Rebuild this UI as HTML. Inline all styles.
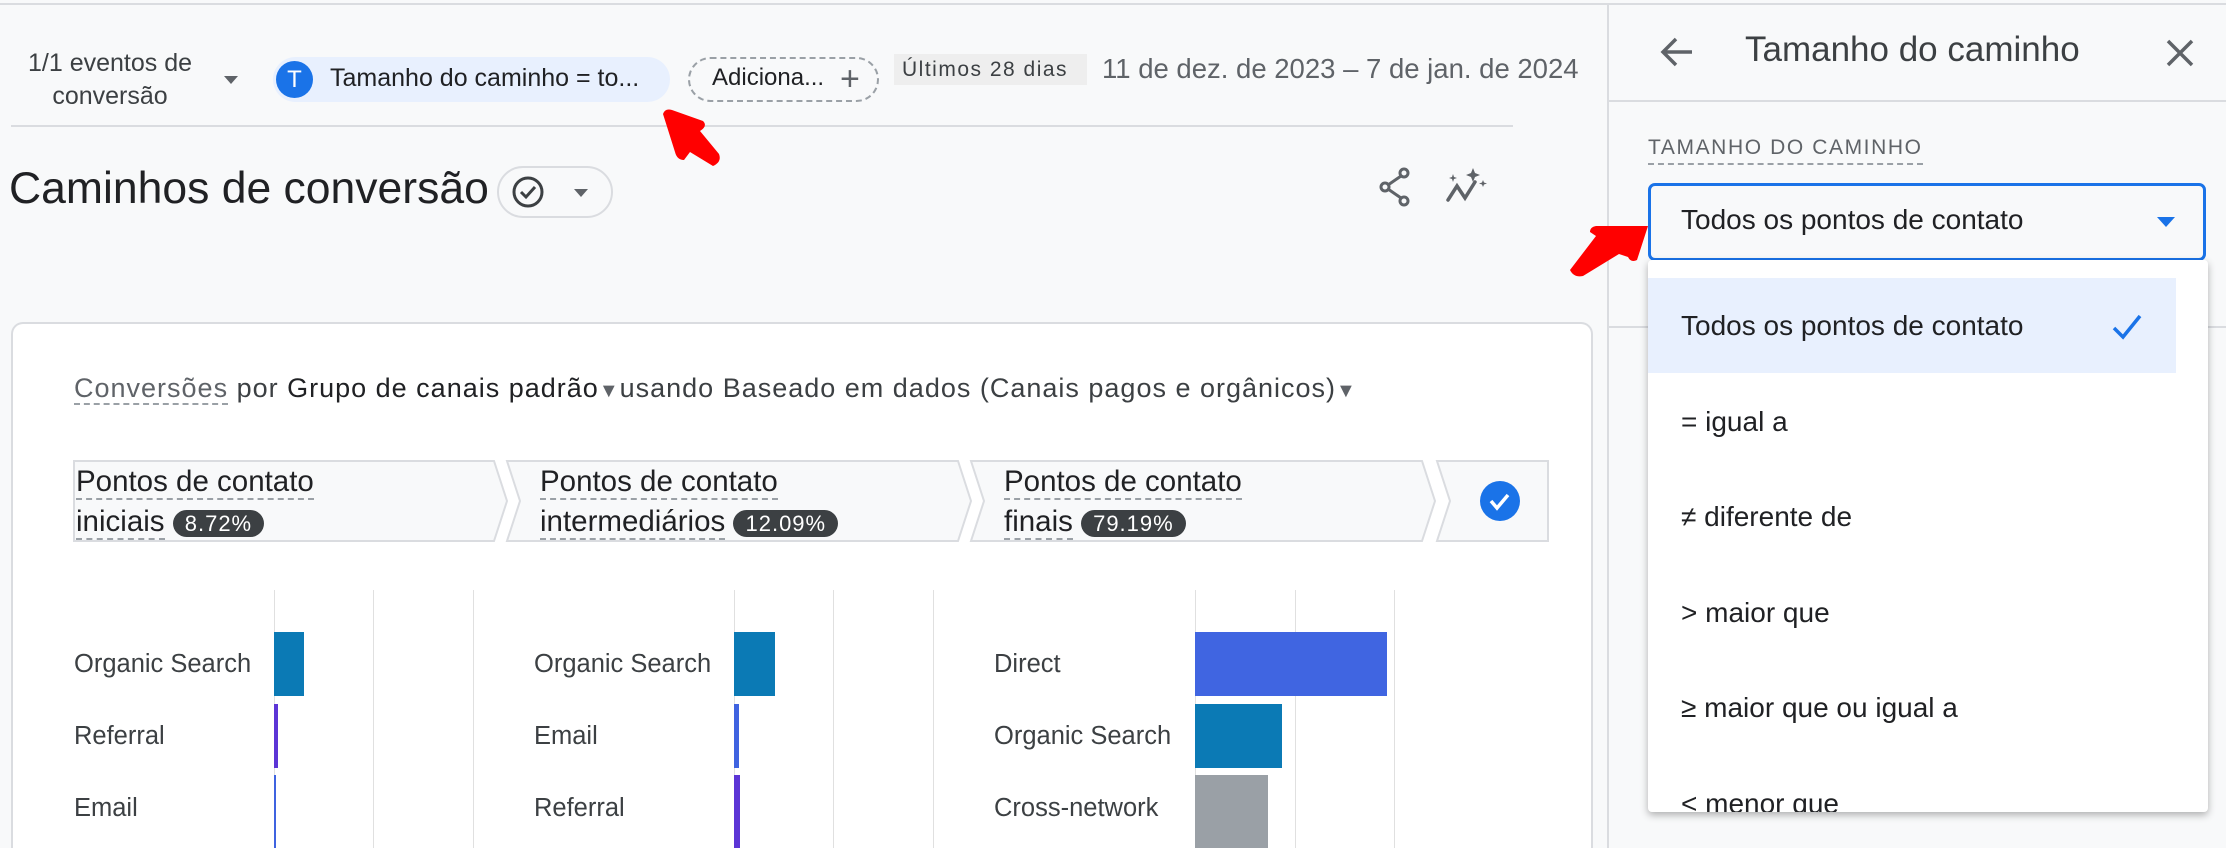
<!DOCTYPE html>
<html style="width:2226px;height:848px;overflow:hidden"><head><meta charset="utf-8"><style>
*{box-sizing:border-box;margin:0;padding:0}
body{width:2226px;height:848px;overflow:hidden;background:#f8f9fa;font-family:"Liberation Sans",sans-serif;color:#202124;position:relative}
.a{position:absolute;white-space:nowrap}
.dot{border-bottom:2px dashed #9aa0a6}
.gl{position:absolute;width:1px;background:#e0e0e0;top:590px;height:258px}
.bd{background:#3c4043;color:#fff;border-radius:15px;padding:1px 12px;font-size:22px;letter-spacing:1px}
</style></head><body>
<div class="a" style="left:0;top:3px;width:2226px;height:2px;background:#dadce0"></div>
<div class="a" style="left:28px;top:47px;font-size:25px;line-height:33px;text-align:center;color:#3c4043">1/1 eventos de<br>conversão</div>
<div class="a" style="left:224px;top:76px;width:0;height:0;border-left:7px solid transparent;border-right:7px solid transparent;border-top:8px solid #5f6368"></div>
<div class="a" style="left:273px;top:57px;width:397px;height:45px;border-radius:23px;background:#e8f0fe"></div>
<div class="a" style="left:276px;top:61px;width:37px;height:37px;border-radius:50%;background:#1a73e8;color:#fff;font-size:24px;line-height:37px;text-align:center">T</div>
<div class="a" style="left:330px;top:64px;font-size:25px;color:#202124">Tamanho do caminho = to...</div>
<div class="a" style="left:688px;top:57px;width:191px;height:45px;border-radius:23px;border:2px dashed #9aa0a6"></div>
<div class="a" style="left:712px;top:64px;font-size:24px">Adiciona...</div>
<div class="a" style="left:840px;top:64px;font-size:34px;line-height:30px;color:#5f6368">+</div>
<div class="a" style="left:894px;top:54px;width:193px;height:31px;background:#eeeeee;font-size:21px;line-height:31px;padding-left:8px;color:#3c4043;letter-spacing:1.5px">Últimos 28 dias</div>
<div class="a" style="left:1102px;top:53px;font-size:27.5px;color:#5f6368">11 de dez. de 2023 – 7 de jan. de 2024</div>
<div class="a" style="left:11px;top:125px;width:1502px;height:2px;background:#dadce0"></div>
<div class="a" style="left:9px;top:164px;font-size:44.5px;color:#202124">Caminhos de conversão</div>
<div class="a" style="left:497px;top:166px;width:116px;height:52px;border-radius:26px;border:2px solid #dadce0"></div>
<svg class="a" style="left:511px;top:175px" width="34" height="34" viewBox="0 0 34 34"><circle cx="17" cy="17" r="14" fill="none" stroke="#3c4043" stroke-width="3"/><path d="M10 17l5 5 9-10" fill="none" stroke="#3c4043" stroke-width="3"/></svg>
<div class="a" style="left:574px;top:189px;border-left:7px solid transparent;border-right:7px solid transparent;border-top:8px solid #5f6368"></div>
<svg class="a" style="left:1378px;top:166px" width="36" height="42" viewBox="0 0 36 42"><g fill="none" stroke="#5f6368" stroke-width="3"><circle cx="26" cy="7" r="4"/><circle cx="7" cy="21" r="4"/><circle cx="26" cy="35" r="4"/><path d="M10 19l13-9M10 23l13 9"/></g></svg>
<svg class="a" style="left:1445px;top:166px" width="46" height="42" viewBox="0 0 46 42"><g fill="none" stroke="#5f6368" stroke-width="3.5" stroke-linecap="round"><path d="M3 34l9-14 8 12 10-16"/></g><path d="M28 2l2 5 5 2-5 2-2 5-2-5-5-2 5-2z M8 8l1 3 3 1-3 1-1 3-1-3-3-1 3-1z M38 14l1 2.5 3 1-3 1-1 2.5-1-2.5-3-1 3-1z" fill="#5f6368"/></svg>
<!-- card -->
<div class="a" style="left:11px;top:322px;width:1582px;height:540px;background:#fff;border:2px solid #dadce0;border-bottom:none;border-radius:12px 12px 0 0"></div>
<div class="a" style="left:74px;top:373px;font-size:27px;letter-spacing:1px;color:#3c4043"><span class="dot" style="color:#5f6368">Conversões</span> por <span style="color:#202124">Grupo de canais padrão</span><span style="font-size:20px;color:#5f6368">▼</span>usando Baseado em dados (Canais pagos e orgânicos)<span style="font-size:20px;color:#5f6368">▼</span></div>
<svg class="a" style="left:70px;top:458px" width="1490" height="86" viewBox="0 0 1490 86"><g fill="#f8f9fa" stroke="#dadce0" stroke-width="2"><path d="M4 3H424L437 43L424 83H4z"/><path d="M437 3H888L901 43L888 83H437L450 43z"/><path d="M901 3H1352L1365 43L1352 83H901L914 43z"/><path d="M1367 3H1478V83H1367L1380 43z"/></g><circle cx="1430" cy="43" r="20" fill="#1a73e8"/><path d="M1421 43l6 7 11-13" fill="none" stroke="#fff" stroke-width="3.5"/></svg>
<div class="a" style="left:76px;top:462px;font-size:29.5px;line-height:40px"><span class="dot">Pontos de contato</span><br><span class="dot">iniciais</span> <span class="bd">8.72%</span></div>
<div class="a" style="left:540px;top:462px;font-size:29.5px;line-height:40px"><span class="dot">Pontos de contato</span><br><span class="dot">intermediários</span> <span class="bd">12.09%</span></div>
<div class="a" style="left:1004px;top:462px;font-size:29.5px;line-height:40px"><span class="dot">Pontos de contato</span><br><span class="dot">finais</span> <span class="bd">79.19%</span></div>
<div class="gl" style="left:274px"></div><div class="gl" style="left:373px"></div><div class="gl" style="left:473px"></div>
<div class="gl" style="left:734px"></div><div class="gl" style="left:833px"></div><div class="gl" style="left:933px"></div>
<div class="gl" style="left:1195px"></div><div class="gl" style="left:1295px"></div><div class="gl" style="left:1394px"></div>
<div class="a" style="left:274px;top:632px;width:30px;height:64px;background:#0b7ab5"></div>
<div class="a" style="left:274px;top:704px;width:4px;height:64px;background:#5c35d6"></div>
<div class="a" style="left:274px;top:775px;width:2px;height:73px;background:#3f63e0"></div>
<div class="a" style="left:734px;top:632px;width:41px;height:64px;background:#0b7ab5"></div>
<div class="a" style="left:734px;top:704px;width:5px;height:64px;background:#3f63e0"></div>
<div class="a" style="left:734px;top:775px;width:6px;height:73px;background:#5c35d6"></div>
<div class="a" style="left:1195px;top:632px;width:192px;height:64px;background:#4065e1"></div>
<div class="a" style="left:1195px;top:704px;width:87px;height:64px;background:#0b7ab5"></div>
<div class="a" style="left:1195px;top:775px;width:73px;height:73px;background:#9aa0a6"></div>
<div class="a" style="left:74px;top:628px;font-size:25.5px;line-height:72px;color:#3c4043">Organic Search<br>Referral<br>Email</div>
<div class="a" style="left:534px;top:628px;font-size:25.5px;line-height:72px;color:#3c4043">Organic Search<br>Email<br>Referral</div>
<div class="a" style="left:994px;top:628px;font-size:25.5px;line-height:72px;color:#3c4043">Direct<br>Organic Search<br>Cross-network</div>
<!-- right panel -->
<div class="a" style="left:1607px;top:3px;width:2px;height:845px;background:#dadce0"></div>
<svg class="a" style="left:1659px;top:34px" width="36" height="36" viewBox="0 0 36 36"><path d="M33 18H5M17 5L4 18l13 13" fill="none" stroke="#5f6368" stroke-width="3.5"/></svg>
<div class="a" style="left:1745px;top:30px;font-size:35px;color:#3c4043">Tamanho do caminho</div>
<svg class="a" style="left:2165px;top:38px" width="30" height="30" viewBox="0 0 30 30"><path d="M3 3l24 24M27 3L3 27" stroke="#5f6368" stroke-width="3.5"/></svg>
<div class="a" style="left:1609px;top:100px;width:617px;height:2px;background:#dadce0"></div>
<div class="a dot" style="left:1648px;top:136px;font-size:21px;color:#5f6368;letter-spacing:1.6px;padding-bottom:3px">TAMANHO DO CAMINHO</div>
<div class="a" style="left:1648px;top:183px;width:558px;height:78px;border:3px solid #1a73e8;border-radius:7px"></div>
<div class="a" style="left:1681px;top:204px;font-size:28px">Todos os pontos de contato</div>
<div class="a" style="left:2157px;top:217px;border-left:9px solid transparent;border-right:9px solid transparent;border-top:10px solid #1a73e8"></div>
<div class="a" style="left:1609px;top:326px;width:617px;height:2px;background:#dadce0"></div>
<div class="a" style="left:1648px;top:260px;width:560px;height:552px;background:#fff;box-shadow:0 3px 8px rgba(0,0,0,.3);border-radius:4px;overflow:hidden">
<div style="position:absolute;left:0;top:18px;width:528px;height:95px;background:#e8f0fe"></div>
<div style="position:absolute;left:33px;top:18px;font-size:28px;line-height:95.6px">Todos os pontos de contato<br>= igual a<br>≠ diferente de<br>&gt; maior que<br>≥ maior que ou igual a<br>&lt; menor que</div>
<svg style="position:absolute;left:462px;top:52px" width="34" height="30" viewBox="0 0 34 30"><path d="M4 16l9 9L30 4" fill="none" stroke="#1a73e8" stroke-width="3.5"/></svg>
</div>
<!-- red arrows -->
<svg class="a" style="left:0;top:0" width="2226" height="848"><path d="M663 114Q665 108 672 110L703 121Q708 126 700 131L719 154Q722 162 713 166L690 152L684 160Q677 160 675 152Z" fill="#f00"/><path d="M1648 226L1637 260Q1631 263 1628 257L1619 254L1583 276Q1574 278 1570 270L1596 236L1590 232Q1590 227 1596 226Z" fill="#f00"/></svg>
</body></html>
